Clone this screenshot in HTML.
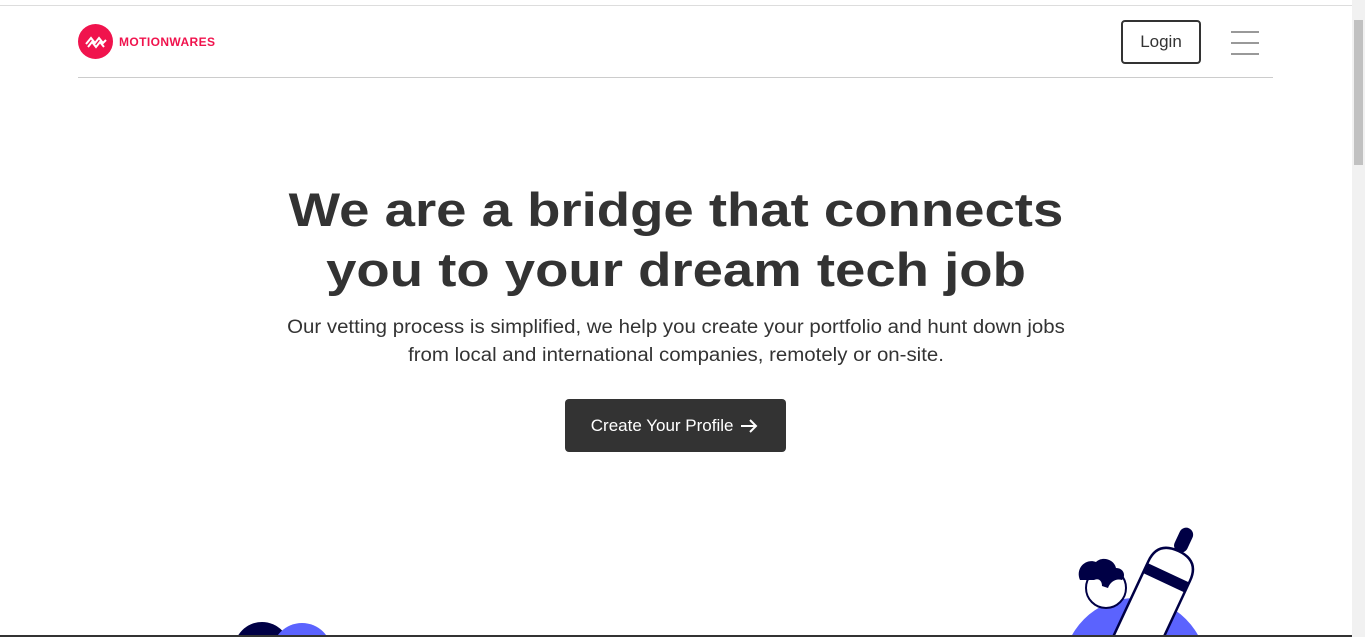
<!DOCTYPE html>
<html><head><meta charset="utf-8"><style>
*{margin:0;padding:0;box-sizing:border-box}
html,body{width:1365px;height:637px;overflow:hidden;background:#fff;font-family:"Liberation Sans",sans-serif;color:#333}
.topline{position:absolute;left:0;top:5px;width:1352px;height:1px;background:#ddd}
.sb{position:absolute;left:1352px;top:0;width:13px;height:637px;background:#f1f1f1}
.thumb{position:absolute;left:1354px;top:20px;width:9px;height:145px;background:#c1c1c1}
.logo{position:absolute;left:78px;top:24px;display:flex;align-items:center}
.logo span{font-weight:bold;font-size:12px;color:#f0134d;margin-left:6px;letter-spacing:.4px}
.hr{position:absolute;left:78px;top:77px;width:1195px;height:1px;background:#ccc}
.login{position:absolute;left:1121px;top:20px;width:80px;height:44px;border:2px solid #333;border-radius:4px;font-size:17px;display:flex;align-items:center;justify-content:center;color:#333}
.burger{position:absolute;left:1231px;top:31px;width:28px}
.burger i{display:block;height:2px;background:#999;margin-bottom:9px}
h1{position:absolute;left:0;width:1352px;top:180px;text-align:center;font-size:47px;line-height:60px;font-weight:bold;color:#333;transform:scaleX(1.16);transform-origin:676px 0}
p{position:absolute;left:0;width:1352px;top:314px;text-align:center;font-size:19px;line-height:28px;color:#333;transform:scaleX(1.075);transform-origin:676px 0}
.btn{position:absolute;left:565px;top:399px;width:221px;height:53px;background:#333;border-radius:4px;color:#fff;font-size:17px;display:flex;align-items:center;justify-content:center}
.bot{position:absolute;left:0;top:635px;width:1352px;height:2px;background:#333}
</style></head><body>
<div class="topline"></div>
<div class="sb"></div><div class="thumb"></div>
<div class="logo"><svg width="35" height="35" viewBox="0 0 35 35"><circle cx="17.5" cy="17.5" r="17.5" fill="#f0134d"/><path d="M8 20l5-6 4 5 4-5 4 5 3-3M10 23l4-5 4 5 4-5 4 5" stroke="#fff" stroke-width="2" fill="none"/></svg><span>MOTIONWARES</span></div>
<div class="login">Login</div>
<div class="burger"><i></i><i></i><i></i></div>
<div class="hr"></div>
<h1>We are a bridge that connects<br>you to your dream tech job</h1>
<p>Our vetting process is simplified, we help you create your portfolio and hunt down jobs<br>from local and international companies, remotely or on-site.</p>
<div class="btn">Create Your Profile&nbsp;<svg width="22" height="18" viewBox="0 0 22 18"><path d="M3 9h15M12 3l6 6-6 6" stroke="#fff" stroke-width="2" fill="none"/></svg></div>
<svg style="position:absolute;left:0;top:520px;display:block" width="1352" height="115">
<circle cx="262" cy="130" r="28" fill="#000045"/>
<circle cx="302" cy="133" r="30" fill="#5b63fe"/>
<circle cx="1135" cy="150" r="72" fill="#5b63fe"/>
<circle cx="1106" cy="68" r="20" fill="#fff" stroke="#000045" stroke-width="2"/>
<path d="M1080 60c-5-12 6-22 16-18 6-6 18-3 20 6 8 0 10 8 6 12-6-2-12 2-14 8l-6-2c0-6-4-8-8-6z" fill="#000045"/>
<g transform="rotate(25 1165 60)"><rect x="1158" y="3" width="14" height="26" rx="7" fill="#000045"/><path d="M1142 160V50q0-22 23-22t23 22v110z" fill="#fff" stroke="#000045" stroke-width="2.5"/><rect x="1142" y="52" width="46" height="11" fill="#000045"/></g>
</svg>
<div class="bot"></div>
</body></html>
